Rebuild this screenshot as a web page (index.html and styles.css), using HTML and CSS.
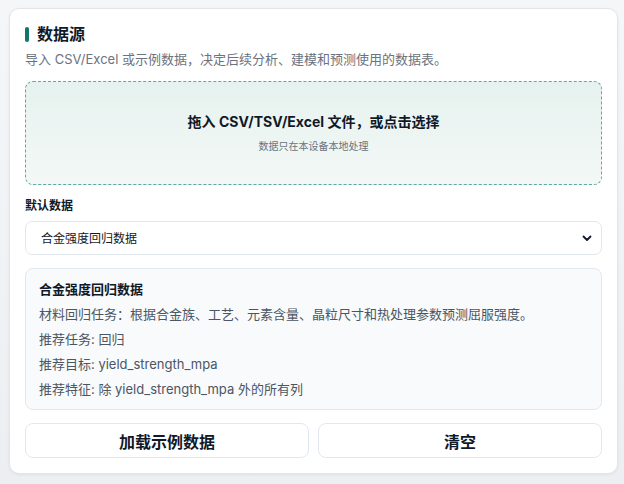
FILE: index.html
```html
<!DOCTYPE html>
<html lang="zh-CN">

<head>
    <meta charset="UTF-8" />
    <meta name="viewport" content="width=device-width, initial-scale=1.0" />
    <title>数据源</title>
    <link rel="stylesheet" href="styles.css">
</head>

<body>
    <section class="panel">
        <h2 class="panel-title">数据源</h2>
        <p class="panel-desc">导入 CSV/Excel 或示例数据，决定后续分析、建模和预测使用的数据表。</p>

        <label class="dropzone">
            <input type="file" class="file-input" accept=".csv,.tsv,.xlsx,.xls">
            <div class="drop-title">拖入 CSV/TSV/Excel 文件，或点击选择</div>
            <div class="drop-hint">数据只在本设备本地处理</div>
        </label>

        <div class="field-label">默认数据</div>
        <div class="select-wrap">
            <select class="select">
                <option>合金强度回归数据</option>
            </select>
            <svg class="select-arrow" width="10" height="10" viewBox="0 0 10 10">
                <path d="M1.5 3.5 L5 7 L8.5 3.5" fill="none" stroke="#111827" stroke-width="1.8"
                    stroke-linecap="round" stroke-linejoin="round" />
            </svg>
        </div>

        <div class="info">
            <div class="info-title">合金强度回归数据</div>
            <div class="info-line">材料回归任务：根据合金族、工艺、元素含量、晶粒尺寸和热处理参数预测屈服强度。</div>
            <div class="info-line">推荐任务: 回归</div>
            <div class="info-line">推荐目标: yield_strength_mpa</div>
            <div class="info-line">推荐特征: 除 yield_strength_mpa 外的所有列</div>
        </div>

        <div class="actions">
            <button class="btn">加载示例数据</button>
            <button class="btn">清空</button>
        </div>
    </section>
</body>

</html>
```

FILE: styles.css
```css
body {
    margin: 0;
    padding: 8px 6px 0 9px;
    height: 484px;
    box-sizing: border-box;
    font-family: Inter, "Noto Sans CJK SC", sans-serif;
    color: #111827;
    background: linear-gradient(#f5f6f8, #eceef1);
}

.panel {
    background: #fff;
    border: 1px solid #e2e5ea;
    border-radius: 10px;
    padding: 15px;
    box-shadow: 0 1px 3px rgba(15, 23, 42, 0.06);
}

.panel-title {
    display: flex;
    align-items: center;
    gap: 8px;
    margin: 0;
    font-size: 16px;
    line-height: 20px;
    font-weight: 700;
}

.panel-title::before {
    content: "";
    width: 4px;
    height: 15px;
    border-radius: 2px;
    background: #0f766e;
}

.panel-desc {
    margin: 5px 0 0;
    font-size: 13px;
    line-height: 20px;
    color: #6b7280;
}

/* upload area */
.dropzone {
    display: block;
    margin-top: 12px;
    padding: 30px 16px;
    border: 1px dashed #5ea9a1;
    border-radius: 8px;
    background: linear-gradient(#e6f2ef, #f3f8f6);
    text-align: center;
    cursor: pointer;
}

.file-input {
    display: none;
}

.drop-title {
    font-size: 14px;
    line-height: 20px;
    font-weight: 700;
    color: #111827;
}

.drop-hint {
    margin-top: 6px;
    font-size: 10px;
    line-height: 16px;
    color: #6b7280;
}

.field-label {
    margin-top: 12px;
    font-size: 12px;
    line-height: 18px;
    font-weight: 700;
}

.select-wrap {
    position: relative;
    margin-top: 6px;
}

.select {
    appearance: none;
    width: 100%;
    height: 34px;
    padding: 0 30px 0 15px;
    border: 1px solid #e2e8f0;
    border-radius: 7px;
    background: #fff;
    font-family: inherit;
    font-size: 12px;
    color: #111827;
}

.select-arrow {
    position: absolute;
    right: 10px;
    top: 12px;
    pointer-events: none;
}

/* dataset description */
.info {
    margin-top: 13px;
    padding: 11px 13px;
    border: 1px solid #e2e8f0;
    border-radius: 8px;
    background: #f8fafc;
}

.info-title {
    font-size: 13px;
    line-height: 18px;
    font-weight: 700;
}

.info-line {
    margin-top: 7px;
    font-size: 13px;
    line-height: 18px;
    color: #4b5563;
}

.actions {
    display: grid;
    grid-template-columns: 1fr 1fr;
    gap: 9px;
    margin-top: 13px;
}

.btn {
    height: 35px;
    border: 1px solid #e2e8f0;
    border-radius: 8px;
    background: #fff;
    font-family: inherit;
    font-size: 16px;
    font-weight: 700;
    color: #111827;
    cursor: pointer;
}
```
